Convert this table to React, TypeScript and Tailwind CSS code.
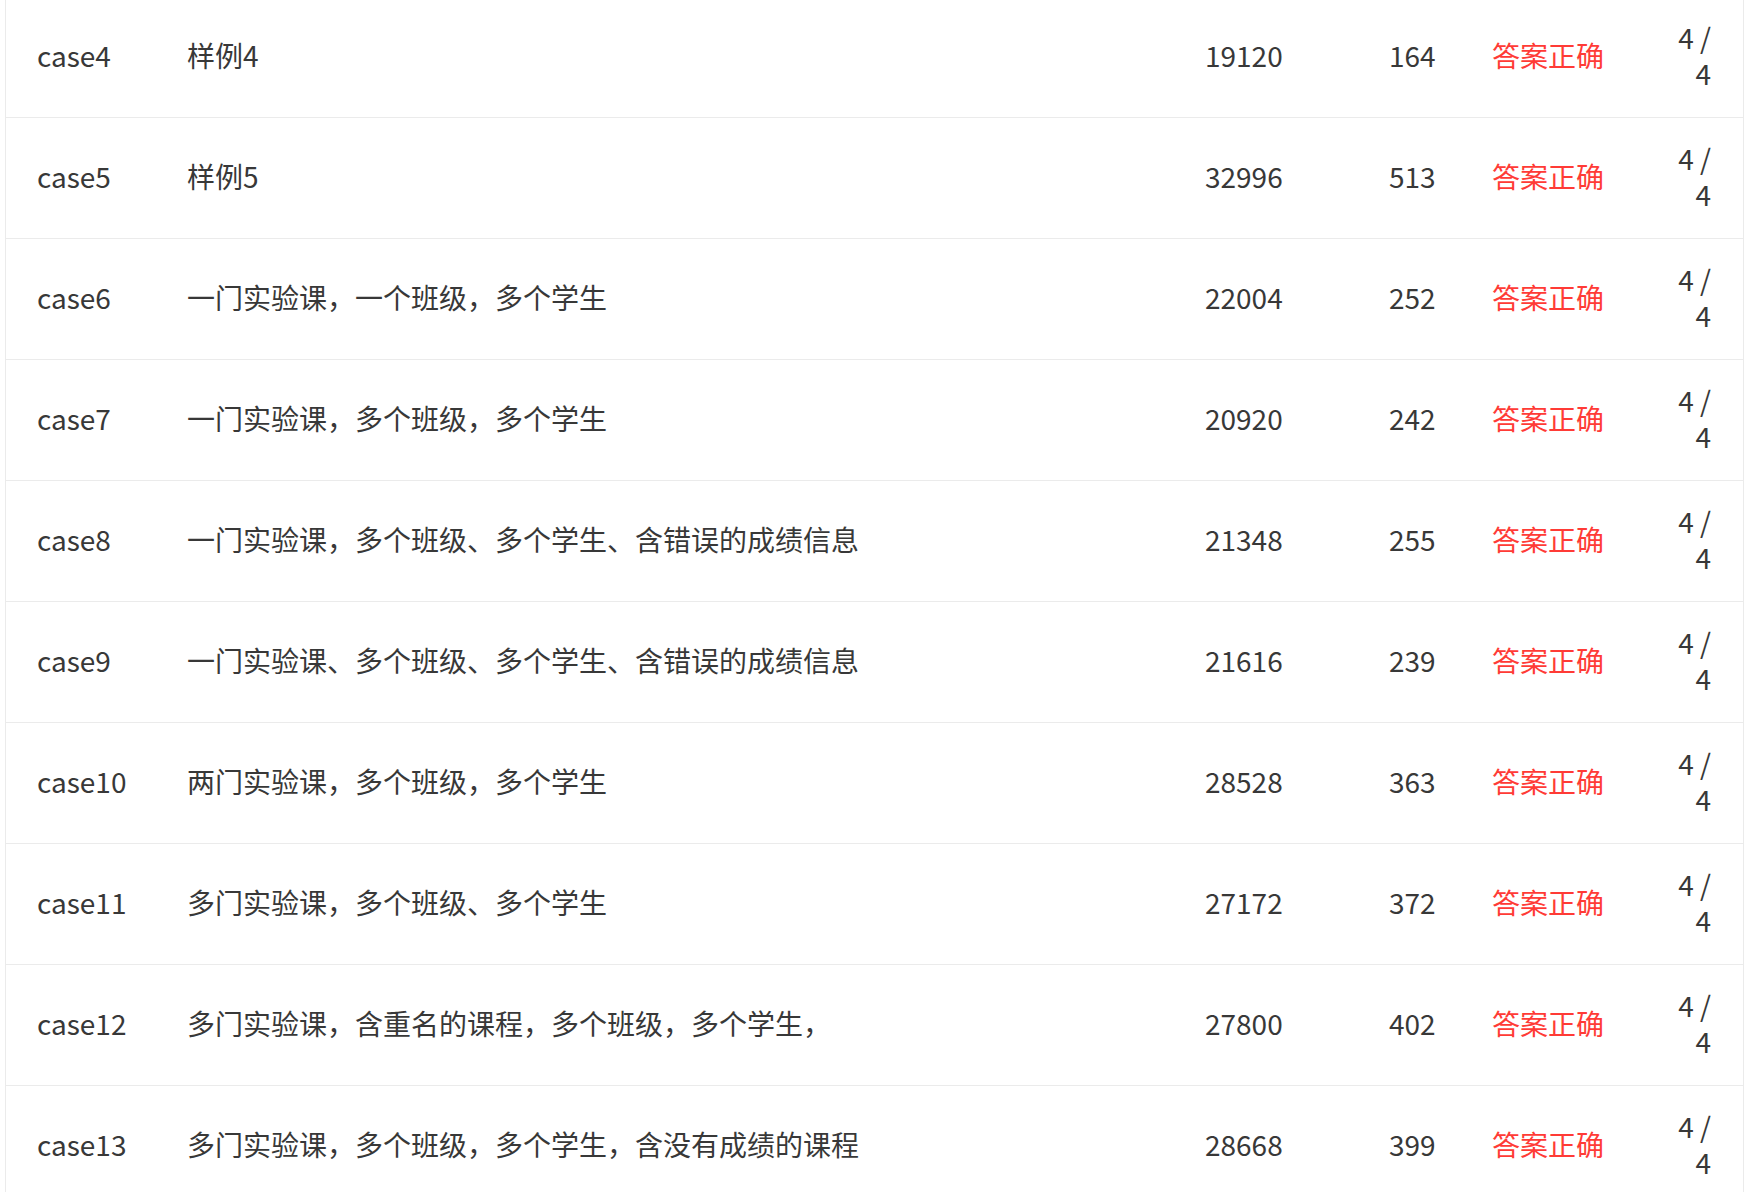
import React from "react";

const rows = [
  { id: "case4", desc: "样例4", a: "19120", b: "164" },
  { id: "case5", desc: "样例5", a: "32996", b: "513" },
  { id: "case6", desc: "一门实验课，一个班级，多个学生", a: "22004", b: "252" },
  { id: "case7", desc: "一门实验课，多个班级，多个学生", a: "20920", b: "242" },
  { id: "case8", desc: "一门实验课，多个班级、多个学生、含错误的成绩信息", a: "21348", b: "255" },
  { id: "case9", desc: "一门实验课、多个班级、多个学生、含错误的成绩信息", a: "21616", b: "239" },
  { id: "case10", desc: "两门实验课，多个班级，多个学生", a: "28528", b: "363" },
  { id: "case11", desc: "多门实验课，多个班级、多个学生", a: "27172", b: "372" },
  { id: "case12", desc: "多门实验课，含重名的课程，多个班级，多个学生，", a: "27800", b: "402" },
  { id: "case13", desc: "多门实验课，多个班级，多个学生，含没有成绩的课程", a: "28668", b: "399" },
];

const App = () => {
  return (
    <div className="w-full h-[1192px] overflow-hidden bg-white">
      <div
        className="ml-[5px] mr-[3px] mt-[-3px] border-x border-[#ebebeb] text-[28px] text-[#383838]"
        style={{ fontFamily: '"Noto Sans CJK SC", "Noto Sans", sans-serif' }}
      >
        {rows.map((r) => (
          <div
            key={r.id}
            className="grid grid-cols-[150px_1018px_184px_103px_199px_1fr] h-[121px] pb-[4px] border-b border-[#ebebeb] items-center"
          >
            <div className="pl-[31px]">{r.id}</div>
            <div className="pl-[31px] whitespace-nowrap">{r.desc}</div>
            <div className="pl-[31px]">{r.a}</div>
            <div className="pl-[31px]">{r.b}</div>
            <div className="pl-[31px] text-[#ff3b36]">答案正确</div>
            <div className="pl-[10px] pr-[32px] text-right leading-[36px]">4 / 4</div>
          </div>
        ))}
      </div>
    </div>
  );
};

export default App;
